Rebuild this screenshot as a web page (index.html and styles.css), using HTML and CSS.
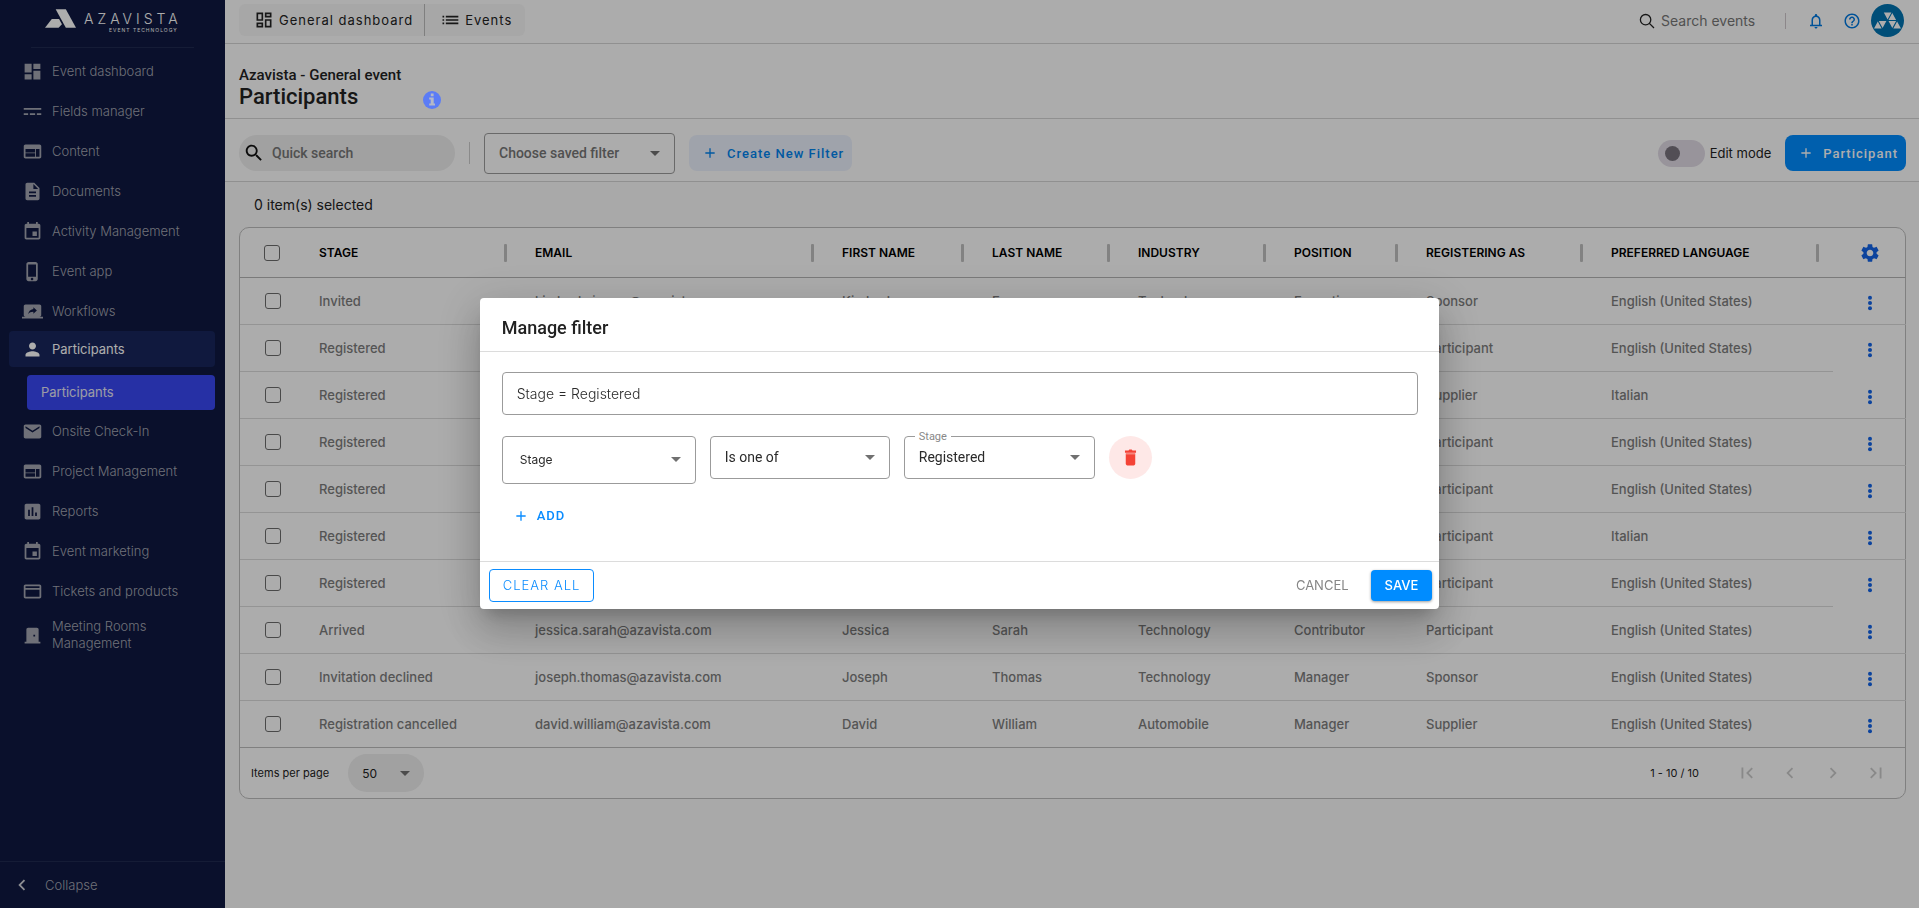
FILE: index.html
```html
<!DOCTYPE html>
<html lang="en">
<head>
<meta charset="utf-8">
<title>Participants</title>
<link rel="stylesheet" href="styles.css">
</head>
<body>
<svg class="sprite" aria-hidden="true">
  <symbol id="i-dashboard" viewBox="0 0 24 24"><path d="M3 13h8V3H3v10zm0 8h8v-6H3v6zm10 0h8V11h-8v10zm0-18v6h8V3h-8z"/></symbol>
  <symbol id="i-fields" viewBox="0 0 24 24"><path d="M2 8h20v2H2zM2 14h5v2H2zM9 14h6v2H9zM17 14h5v2h-5z"/></symbol>
  <symbol id="i-web" viewBox="0 0 24 24"><path d="M20 4H4c-1.1 0-1.99.9-1.99 2L2 18c0 1.1.9 2 2 2h16c1.1 0 2-.9 2-2V6c0-1.1-.9-2-2-2zm-5 14H4v-4h11v4zm0-5H4V9h11v4zm5 5h-4V9h4v9z"/></symbol>
  <symbol id="i-doc" viewBox="0 0 24 24"><path d="M14 2H6c-1.1 0-1.99.9-1.99 2L4 20c0 1.1.89 2 1.99 2H18c1.1 0 2-.9 2-2V8l-6-6zm2 16H8v-2h8v2zm0-4H8v-2h8v2zm-3-5V3.5L18.5 9H13z"/></symbol>
  <symbol id="i-event" viewBox="0 0 24 24"><path d="M17 12h-5v5h5v-5zM16 1v2H8V1H6v2H5c-1.11 0-1.99.9-1.99 2L3 19c0 1.1.89 2 2 2h14c1.1 0 2-.9 2-2V5c0-1.1-.9-2-2-2h-1V1h-2zm3 18H5V8h14v11z"/></symbol>
  <symbol id="i-phone" viewBox="0 0 24 24"><path d="M15.5 1h-8C6.12 1 5 2.12 5 3.5v17C5 21.88 6.12 23 7.5 23h8c1.38 0 2.5-1.12 2.5-2.5v-17C18 2.12 16.88 1 15.5 1zm-4 21c-.83 0-1.5-.67-1.5-1.5s.67-1.5 1.5-1.5 1.5.67 1.5 1.5-.67 1.5-1.5 1.5zm4.5-4H7V4h9v14z"/></symbol>
  <symbol id="i-share" viewBox="0 0 24 24"><path d="M20 18c1.1 0 1.99-.9 1.99-2L22 6c0-1.11-.9-2-2-2H4c-1.11 0-2 .89-2 2v10c0 1.1.89 2 2 2H0v2h24v-2h-4zm-7-3.53v-2.19c-2.78 0-4.61.85-6 2.72.56-2.67 2.11-5.33 6-5.87V7l4 3.73-4 3.74z"/></symbol>
  <symbol id="i-person" viewBox="0 0 24 24"><path d="M12 12c2.21 0 4-1.79 4-4s-1.79-4-4-4-4 1.79-4 4 1.79 4 4 4zm0 2c-2.67 0-8 1.34-8 4v2h16v-2c0-2.66-5.33-4-8-4z"/></symbol>
  <symbol id="i-mail" viewBox="0 0 24 24"><path d="M20 4H4c-1.1 0-1.99.9-1.99 2L2 18c0 1.1.9 2 2 2h16c1.1 0 2-.9 2-2V6c0-1.1-.9-2-2-2zm0 4l-8 5-8-5V6l8 5 8-5v2z"/></symbol>
  <symbol id="i-report" viewBox="0 0 24 24"><path d="M19 3H5c-1.1 0-2 .9-2 2v14c0 1.1.9 2 2 2h14c1.1 0 2-.9 2-2V5c0-1.1-.9-2-2-2zM9 17H7v-7h2v7zm4 0h-2V7h2v10zm4 0h-2v-4h2v4z"/></symbol>
  <symbol id="i-card" viewBox="0 0 24 24"><path d="M20 4H4c-1.11 0-1.99.89-1.99 2L2 18c0 1.11.89 2 2 2h16c1.11 0 2-.89 2-2V6c0-1.11-.89-2-2-2zm0 14H4v-8h16v8zm0-10H4V6h16v2z"/></symbol>
  <symbol id="i-door" viewBox="0 0 24 24"><path d="M19 19V5c0-1.1-.9-2-2-2H7c-1.1 0-2 .9-2 2v14H3v2h18v-2h-2zm-4-6h-2v-2h2v2z"/></symbol>
  <symbol id="i-dash-outline" viewBox="0 0 24 24"><path d="M19 5v2h-4V5h4M9 5v6H5V5h4m10 8v6h-4v-6h4M9 17v2H5v-2h4M21 3h-8v6h8V3zM11 3H3v10h8V3zm10 8h-8v10h8V11zm-10 4H3v6h8v-6z"/></symbol>
  <symbol id="i-list" viewBox="0 0 24 24"><path d="M3 13h2v-2H3v2zm0 4h2v-2H3v2zm0-8h2V7H3v2zm4 4h15v-2H7v2zm0 4h15v-2H7v2zM7 7v2h15V7H7z"/></symbol>
  <symbol id="i-bell" viewBox="0 0 24 24"><path d="M12 22c1.1 0 2-.9 2-2h-4c0 1.1.9 2 2 2zm8-5h-2v-6c0-3.07-1.63-5.64-4.5-6.32V4c0-.83-.67-1.5-1.5-1.5s-1.5.67-1.5 1.5v.68C7.64 5.36 6 7.92 6 11v6H4v2h16v-2zm-4 0H8v-6c0-2.48 1.51-4.5 4-4.5s4 2.02 4 4.5v6z"/></symbol>
  <symbol id="i-help" viewBox="0 0 24 24"><path d="M11 18h2v-2h-2v2zm1-16C6.48 2 2 6.48 2 12s4.48 10 10 10 10-4.48 10-10S17.52 2 12 2zm0 18c-4.41 0-8-3.59-8-8s3.59-8 8-8 8 3.59 8 8-3.59 8-8 8zm0-14c-2.21 0-4 1.79-4 4h2c0-1.1.9-2 2-2s2 .9 2 2c0 2-3 1.75-3 5h2c0-2.25 3-2.5 3-5 0-2.21-1.79-4-4-4z"/></symbol>
  <symbol id="i-search" viewBox="0 0 24 24"><path d="M15.5 14h-.79l-.28-.27C15.41 12.59 16 11.11 16 9.5 16 5.91 13.09 3 9.5 3S3 5.91 3 9.5 5.91 16 9.5 16c1.61 0 3.09-.59 4.23-1.57l.27.28v.79l5 4.99L20.49 19l-4.99-5zm-6 0C7.01 14 5 11.99 5 9.5S7.01 5 9.5 5 14 7.01 14 9.5 11.99 14 9.5 14z"/></symbol>
  <symbol id="i-search-thin" viewBox="0 0 16 16"><path d="M6.600 1.500a5.200 5.200 0 1 0 0 10.400a5.200 5.200 0 1 0 0-10.400M10.400 10.400L15 15" fill="none" stroke="currentColor" stroke-width="1.300"/></symbol>
  <symbol id="i-gear" viewBox="0 0 24 24"><path d="M19.140 12.940c.04-.3.06-.61.06-.94 0-.32-.02-.64-.07-.94l2.030-1.580c.18-.14.23-.41.12-.61l-1.920-3.320c-.12-.22-.37-.29-.59-.22l-2.390.96c-.5-.38-1.030-.7-1.620-.94l-.36-2.540c-.04-.24-.24-.41-.48-.41h-3.840c-.24 0-.43.17-.47.41l-.36 2.540c-.59.24-1.130.57-1.620.94l-2.390-.96c-.22-.08-.47 0-.59.22L2.740 8.870c-.12.21-.08.47.12.61l2.030 1.580c-.05.3-.09.63-.09.94s.02.64.07.94l-2.030 1.580c-.18.14-.23.41-.12.61l1.920 3.320c.12.22.37.29.59.22l2.390-.96c.5.38 1.030.7 1.620.94l.36 2.540c.05.24.24.41.48.41h3.840c.24 0 .44-.17.47-.41l.36-2.540c.59-.24 1.130-.56 1.620-.94l2.390.96c.22.08.47 0 .59-.22l1.920-3.320c.12-.22.07-.47-.12-.61l-2.010-1.580zM12 15.600c-1.980 0-3.600-1.620-3.600-3.600s1.620-3.600 3.600-3.600 3.600 1.620 3.600 3.600-1.620 3.600-3.600 3.600z"/></symbol>
  <symbol id="i-more" viewBox="0 0 24 24"><circle cx="12" cy="4" r="3"/><circle cx="12" cy="12" r="3"/><circle cx="12" cy="20" r="3"/></symbol>
  <symbol id="i-plus" viewBox="0 0 24 24"><path d="M19 13h-6v6h-2v-6H5v-2h6V5h2v6h6v2z"/></symbol>
  <symbol id="i-prev" viewBox="0 0 24 24"><path d="M15.410 7.410L14 6l-6 6 6 6 1.410-1.410L10.830 12z"/></symbol>
  <symbol id="i-next" viewBox="0 0 24 24"><path d="M10 6L8.590 7.410 13.170 12l-4.580 4.590L10 18l6-6z"/></symbol>
  <symbol id="i-first" viewBox="0 0 24 24"><path d="M18.410 16.590L13.820 12l4.590-4.590L17 6l-6 6 6 6zM6 6h2v12H6z"/></symbol>
  <symbol id="i-last" viewBox="0 0 24 24"><path d="M5.590 7.410L10.180 12l-4.590 4.590L7 18l6-6-6-6zM16 6h2v12h-2z"/></symbol>
  <symbol id="i-info" viewBox="0 0 18 18"><circle cx="9" cy="9" r="9"/><path fill="#b4b8c8" d="M7.800 2.400h2.800v2.800H7.800zM6.200 6.600h4.500v5.800h1.300v2H6.200v-2h1.500V8.600H6.200z"/></symbol>
  <symbol id="i-trash" viewBox="0 0 24 24"><path d="M6 8h12v12c0 1-.8 2-2 2H8c-1.200 0-2-1-2-2z"/><path opacity=".6" d="M6 6h12v2H6z"/><path d="M5 3h4.500l1-1h3l1 1H19v3H5z"/></symbol>
</svg>

<div class="app">
  <aside class="sidebar">
    <a class="brand" href="#" aria-label="Azavista Event Technology">
      <svg class="brand-mark" viewBox="0 0 32 20"><path d="M11 0h10.500L32 19H21.500z"/><path d="M7 10h7.500l3 5.500L14 19H0z"/></svg>
      <span class="brand-text"><span class="brand-name">AZAVISTA</span><span class="brand-sub">EVENT TECHNOLOGY</span></span>
    </a>
    <nav class="nav">
      <a href="#"><svg><use href="#i-dashboard"/></svg>Event dashboard</a>
      <a href="#"><svg><use href="#i-fields"/></svg>Fields manager</a>
      <a href="#"><svg><use href="#i-web"/></svg>Content</a>
      <a href="#"><svg><use href="#i-doc"/></svg>Documents</a>
      <a href="#"><svg><use href="#i-event"/></svg>Activity Management</a>
      <a href="#"><svg><use href="#i-phone"/></svg>Event app</a>
      <a href="#"><svg><use href="#i-share"/></svg>Workflows</a>
      <a href="#" class="open"><svg><use href="#i-person"/></svg>Participants</a>
      <a href="#" class="sub">Participants</a>
      <a href="#"><svg><use href="#i-mail"/></svg>Onsite Check-In</a>
      <a href="#"><svg><use href="#i-web"/></svg>Project Management</a>
      <a href="#"><svg><use href="#i-report"/></svg>Reports</a>
      <a href="#"><svg><use href="#i-event"/></svg>Event marketing</a>
      <a href="#"><svg><use href="#i-card"/></svg>Tickets and products</a>
      <a href="#" class="tall"><svg><use href="#i-door"/></svg>Meeting Rooms Management</a>
    </nav>
    <button class="collapse" type="button"><svg><use href="#i-prev"/></svg>Collapse</button>
  </aside>

  <main class="main">
    <header class="topbar">
      <div class="tabs">
        <a href="#"><svg><use href="#i-dash-outline"/></svg>General dashboard</a>
        <a href="#"><svg><use href="#i-list"/></svg>Events</a>
      </div>
      <label class="event-search"><svg><use href="#i-search-thin"/></svg><input type="text" placeholder="Search events" aria-label="Search events"></label>
      <span class="top-rule"></span>
      <button class="top-icon" type="button" aria-label="Notifications"><svg><use href="#i-bell"/></svg></button>
      <button class="top-icon" type="button" aria-label="Help"><svg><use href="#i-help"/></svg></button>
      <button class="avatar" type="button" aria-label="Account">
        <svg viewBox="0 0 33 33"><circle cx="16.500" cy="16.500" r="16.500" fill="#0073b1"/><path fill="#fff" d="M12.800 8.500h7.600l-3.800 7zM17.500 16l3.800-7 3.800 7zM3 24.500l3.800-7 3.800 7zM7.800 17h7.600l-3.800 7zM17.500 17h7.600l-3.800 7zM22.300 24.500l3.800-7 3.900 7z"/></svg>
      </button>
    </header>

    <section class="heading">
      <p class="event-name">Azavista - General event</p>
      <div class="title-row"><h1>Participants</h1><button class="info" type="button" aria-label="Information"><svg><use href="#i-info"/></svg></button></div>
    </section>

    <section class="toolbar">
      <label class="quick"><svg><use href="#i-search"/></svg><input type="text" placeholder="Quick search" aria-label="Quick search"></label>
      <span class="tool-rule"></span>
      <select class="select saved" aria-label="Saved filter"><option>Choose saved filter</option></select>
      <button class="create" type="button"><svg><use href="#i-plus"/></svg>Create New Filter</button>
      <label class="switch"><input type="checkbox"><span class="track"></span>Edit mode</label>
      <button class="add-participant" type="button"><svg><use href="#i-plus"/></svg>Participant</button>
    </section>

    <p class="selected">0 item(s) selected</p>

    <section class="card">
      <table class="grid">
        <colgroup><col class="c-check"><col class="c-stage"><col class="c-email"><col class="c-first"><col class="c-last"><col class="c-industry"><col class="c-position"><col class="c-reg"><col class="c-lang"><col class="c-menu"></colgroup>
        <thead><tr>
          <th class="pick"><input type="checkbox" aria-label="Select all"></th>
          <th><span>STAGE</span></th><th><span>EMAIL</span></th><th><span>FIRST NAME</span></th><th><span>LAST NAME</span></th><th><span>INDUSTRY</span></th><th><span>POSITION</span></th><th><span>REGISTERING AS</span></th><th><span>PREFERRED LANGUAGE</span></th>
          <th class="menu"><button type="button" aria-label="Table settings"><svg><use href="#i-gear"/></svg></button></th>
        </tr></thead>
        <tbody>
          <tr><td class="pick"><input type="checkbox" aria-label="Select row"></td><td>Invited</td><td>kimberly.james@azavista.com</td><td>Kimberly</td><td>Evans</td><td>Technology</td><td>Executive</td><td>Sponsor</td><td>English (United States)</td><td class="menu"><button type="button" aria-label="Row menu"><svg><use href="#i-more"/></svg></button></td></tr>
          <tr class="short"><td class="pick"><input type="checkbox" aria-label="Select row"></td><td>Registered</td><td></td><td></td><td></td><td></td><td></td><td>Participant</td><td>English (United States)</td><td class="menu"><button type="button" aria-label="Row menu"><svg><use href="#i-more"/></svg></button></td></tr>
          <tr><td class="pick"><input type="checkbox" aria-label="Select row"></td><td>Registered</td><td></td><td></td><td></td><td></td><td></td><td>Supplier</td><td>Italian</td><td class="menu"><button type="button" aria-label="Row menu"><svg><use href="#i-more"/></svg></button></td></tr>
          <tr><td class="pick"><input type="checkbox" aria-label="Select row"></td><td>Registered</td><td></td><td></td><td></td><td></td><td></td><td>Participant</td><td>English (United States)</td><td class="menu"><button type="button" aria-label="Row menu"><svg><use href="#i-more"/></svg></button></td></tr>
          <tr><td class="pick"><input type="checkbox" aria-label="Select row"></td><td>Registered</td><td></td><td></td><td></td><td></td><td></td><td>Participant</td><td>English (United States)</td><td class="menu"><button type="button" aria-label="Row menu"><svg><use href="#i-more"/></svg></button></td></tr>
          <tr><td class="pick"><input type="checkbox" aria-label="Select row"></td><td>Registered</td><td></td><td></td><td></td><td></td><td></td><td>Participant</td><td>Italian</td><td class="menu"><button type="button" aria-label="Row menu"><svg><use href="#i-more"/></svg></button></td></tr>
          <tr class="short"><td class="pick"><input type="checkbox" aria-label="Select row"></td><td>Registered</td><td></td><td></td><td></td><td></td><td></td><td>Participant</td><td>English (United States)</td><td class="menu"><button type="button" aria-label="Row menu"><svg><use href="#i-more"/></svg></button></td></tr>
          <tr><td class="pick"><input type="checkbox" aria-label="Select row"></td><td>Arrived</td><td>jessica.sarah@azavista.com</td><td>Jessica</td><td>Sarah</td><td>Technology</td><td>Contributor</td><td>Participant</td><td>English (United States)</td><td class="menu"><button type="button" aria-label="Row menu"><svg><use href="#i-more"/></svg></button></td></tr>
          <tr><td class="pick"><input type="checkbox" aria-label="Select row"></td><td>Invitation declined</td><td>joseph.thomas@azavista.com</td><td>Joseph</td><td>Thomas</td><td>Technology</td><td>Manager</td><td>Sponsor</td><td>English (United States)</td><td class="menu"><button type="button" aria-label="Row menu"><svg><use href="#i-more"/></svg></button></td></tr>
          <tr><td class="pick"><input type="checkbox" aria-label="Select row"></td><td>Registration cancelled</td><td>david.william@azavista.com</td><td>David</td><td>William</td><td>Automobile</td><td>Manager</td><td>Supplier</td><td>English (United States)</td><td class="menu"><button type="button" aria-label="Row menu"><svg><use href="#i-more"/></svg></button></td></tr>
        </tbody>
      </table>
      <footer class="pager">
        <label for="per-page">Items per page</label>
        <select class="select per-page" id="per-page"><option>50</option></select>
        <span class="range">1 - 10 / 10</span>
        <button type="button" disabled aria-label="First page"><svg><use href="#i-first"/></svg></button>
        <button type="button" disabled aria-label="Previous page"><svg><use href="#i-prev"/></svg></button>
        <button type="button" disabled aria-label="Next page"><svg><use href="#i-next"/></svg></button>
        <button type="button" disabled aria-label="Last page"><svg><use href="#i-last"/></svg></button>
      </footer>
    </section>
  </main>
</div>

<div class="backdrop">
  <form class="dialog" role="dialog" aria-labelledby="dialog-title">
    <h2 id="dialog-title">Manage filter</h2>
    <div class="dialog-body">
      <input class="expression" type="text" value="Stage = Registered" aria-label="Filter expression">
      <div class="condition">
        <select class="select field" aria-label="Field"><option>Stage</option></select>
        <select class="select operator" aria-label="Operator"><option>Is one of</option></select>
        <div class="outlined"><label for="stage-value">Stage</label><select class="select value" id="stage-value"><option>Registered</option></select></div>
        <button class="remove" type="button" aria-label="Delete condition"><svg><use href="#i-trash"/></svg></button>
      </div>
      <button class="add" type="button"><svg><use href="#i-plus"/></svg>ADD</button>
    </div>
    <footer class="dialog-actions">
      <button class="clear" type="button">CLEAR ALL</button>
      <button class="cancel" type="button">CANCEL</button>
      <button class="save" type="submit">SAVE</button>
    </footer>
  </form>
</div>
</body>
</html>
```
FILE: styles.css
```css
* { box-sizing: border-box; }
body { margin: 0; font-family: Inter, "Liberation Sans", sans-serif; font-size: 14px; color: #222; background: #f9f9f9; }
svg { display: block; flex: none; fill: currentColor; }
button, input, select { font: inherit; color: inherit; }
button { display: flex; align-items: center; justify-content: center; padding: 0; border: 0; background: none; white-space: nowrap; }
a { color: inherit; text-decoration: none; }
p, h1, h2 { margin: 0; }
.sprite { display: none; }

.app { display: flex; min-height: 100vh; }

.sidebar { display: flex; flex-direction: column; flex: none; width: 225px; background: #0f1941; color: #a4a6b2; }
.brand { display: flex; align-items: flex-start; gap: 8px; height: 48px; margin: 0 31px; padding: 9px 0 0 14px; border-bottom: 1px solid #1f2a50; color: #fff; }
.brand-mark { width: 31px; height: 20px; }
.brand-text { display: flex; flex-direction: column; align-items: flex-end; padding-top: 2px; }
.brand-name { font-size: 14px; line-height: 16px; letter-spacing: 4px; font-weight: 300; }
.brand-sub { padding-right: 4px; font-size: 5px; line-height: 6px; letter-spacing: 1px; }
.nav { display: flex; flex-direction: column; gap: 4px; padding: 5px 10px 0 9px; font-size: 13px; font-weight: 300; line-height: 17px; }
.nav a { display: flex; align-items: center; gap: 9px; min-height: 36px; padding-left: 13px; border-radius: 4px; }
.nav svg { width: 21px; height: 21px; }
.nav .open { margin-top: -2px; background: #18265c; color: #fff; font-weight: 400; }
.nav .sub { min-height: 35px; margin: 4px 0 -1px 18px; padding-left: 14px; background: #3948f4; color: #e6e6f4; font-weight: 400; }
.nav .tall { min-height: 44px; padding-right: 40px; }
.collapse { justify-content: flex-start; gap: 12px; margin-top: auto; height: 47px; padding-left: 11px; border-top: 1px solid #1f2a50; font-size: 13px; font-weight: 300; }
.collapse svg { width: 22px; height: 22px; color: #d0d0d8; }

.main { flex: 1; min-width: 0; }
.topbar { display: flex; align-items: center; height: 44px; padding: 0 15px 2px 14px; background: #fefefe; border-bottom: 1px solid #d4d4d4; }
.tabs { display: flex; height: 32px; margin: 0 auto 2px 0; border-radius: 6px; background: #f7f7f7; font-size: 13px; letter-spacing: 1px; }
.tabs a { display: flex; align-items: center; gap: 5px; padding: 0 13px 0 15px; }
.tabs a:first-child { padding-right: 11px; border-right: 1px solid #bbb; }
.tabs svg { width: 20px; height: 20px; }
.event-search { display: flex; align-items: center; gap: 6px; }
.event-search svg { width: 16px; height: 16px; }
.event-search input { width: 118px; border: 0; padding: 0; background: none; outline: 0; }
.event-search input::placeholder { color: #777; opacity: 1; }
.top-rule { width: 1px; height: 16px; margin: 0 18px 0 6px; background: #cfc8cc; }
.top-icon { width: 24px; margin-right: 12px; color: #0079e0; }
.top-icon svg { width: 18px; height: 18px; }
.top-icon + .avatar { margin-left: -5px; }
.avatar svg { width: 33px; height: 33px; }

.heading { height: 75px; padding: 21px 14px 0; background: #fefefe; border-bottom: 1px solid #d4d4d4; }
.event-name { font-family: Roboto, sans-serif; font-size: 15px; line-height: 20px; font-weight: 500; }
.title-row { display: flex; align-items: flex-end; gap: 65px; }
.title-row h1 { font-family: Roboto, sans-serif; font-size: 22px; line-height: 24px; font-weight: 500; }
.info { position: relative; z-index: 2; color: #5b7cf6; }
.info svg { width: 18px; height: 18px; }

.toolbar { display: flex; align-items: center; height: 63px; padding: 6px 13px 0 14px; background: #fefefe; border-bottom: 1px solid #d4d4d4; font-family: Roboto, sans-serif; }
.quick { display: flex; align-items: center; width: 216px; height: 36px; padding-left: 4px; gap: 7px; border-radius: 18px; background: #ededed; }
.quick svg { width: 22px; height: 22px; color: #111; }
.quick input { flex: 1; min-width: 0; border: 0; padding: 0; background: none; outline: 0; font-weight: 500; }
.quick input::placeholder { color: #777; opacity: 1; }
.tool-rule { width: 1px; height: 22px; margin: 0 14px; background: #ccc; }
.select { appearance: none; border: 1px solid #9b9b9b; border-radius: 4px; outline: 0; background: url("data:image/svg+xml,%3Csvg xmlns='http://www.w3.org/2000/svg' viewBox='0 0 10 5'%3E%3Cpath fill='%23707070' d='M0 0h10L5 5z'/%3E%3C/svg%3E") no-repeat right 14px center / 10px 5px; }
.saved { width: 191px; height: 41px; padding: 0 14px; color: #777; font-weight: 500; }
.create, .add-participant { height: 36px; margin-left: 14px; padding: 0 8px 0 13px; gap: 9px; border-radius: 8px; font-size: 13px; font-weight: 500; letter-spacing: 1px; }
.create { background: #ebf0fc; color: #0083ee; }
.add-participant { background: #008cff; color: #fff; }
.create svg, .add-participant svg, .add svg { width: 16px; height: 16px; }
.switch { display: flex; align-items: center; gap: 5px; margin-left: auto; font-family: Inter, sans-serif; font-size: 13px; }
.switch input { position: absolute; opacity: 0; }
.track { display: flex; align-items: center; width: 47px; height: 27px; padding-left: 7px; border-radius: 14px; background: #e1dbe5; }
.track::before { content: ""; width: 15px; height: 15px; border-radius: 50%; background: #79747e; }

.selected { padding: 13px 29px 0; line-height: 20px; height: 45px; }

.card { margin: 0 13px 0 14px; border: 1px solid #bdbdbd; border-radius: 10px; background: #fefefe; }
.grid { width: 100%; table-layout: fixed; border-collapse: separate; border-spacing: 0; font-size: 13px; font-weight: 500; color: #7d7d7d; }
.c-check { width: 65px; } .c-stage { width: 216px; } .c-email { width: 307px; } .c-first { width: 150px; } .c-last { width: 146px; }
.c-industry { width: 156px; } .c-position { width: 132px; } .c-reg { width: 185px; } .c-lang { width: 236px; } .c-menu { width: 73px; }
.grid th { height: 50px; padding: 0 14px; text-align: left; font-size: 12px; font-weight: 600; color: #000; border-bottom: 1px solid #b4b4b4; }
.grid th span { display: flex; align-items: center; justify-content: space-between; white-space: nowrap; }
.grid th span::after { content: ""; width: 3px; height: 18px; border-radius: 1px; background: #c0c0c0; }
.grid td { height: 47px; padding: 0 14px; white-space: nowrap; border-bottom: 1px solid #dadada; }
.grid .short .menu { border-bottom-color: transparent; }
.grid .pick { padding: 0 0 0 24px; }
.grid td.pick { padding-left: 25px; }
.grid .pick input { display: block; appearance: none; width: 16px; height: 16px; margin: 0; border: 1px solid #6c6c6c; border-radius: 3px; }
.grid .menu { padding: 0 24px; color: #1264e8; }
.grid .menu svg { width: 22px; height: 22px; }
.grid .menu button { margin: 0 auto; }
.grid td.menu { padding-top: 3px; }
.grid td.menu svg { width: 16px; height: 16px; }
.grid tbody tr:last-child td { border-bottom-color: #bdbdbd; }
.pager { display: flex; align-items: center; height: 50px; padding: 0 17px 0 11px; font-size: 11px; }
.per-page { width: 76px; height: 38px; margin-left: 19px; padding: 0 14px; border: 0; border-radius: 19px; background-color: #ededed; font-size: 12px; }
.range { margin: 0 28px 0 auto; }
.pager button { width: 24px; margin-left: 19px; color: #cacaca; }
.pager button svg { width: 22px; height: 22px; }
.range + button { margin-left: 8px; }

.backdrop { position: fixed; inset: 0; z-index: 1; display: flex; align-items: center; justify-content: center; padding-bottom: 2px; background: rgba(0, 0, 0, .32); }
.dialog { width: 50%; border-radius: 4px; background: #fff; box-shadow: 0 11px 15px -7px rgba(0, 0, 0, .2), 0 24px 38px 3px rgba(0, 0, 0, .14), 0 9px 46px 8px rgba(0, 0, 0, .12); font-family: Roboto, sans-serif; color: #2a2a2a; }
.dialog h2 { padding: 20px 22px 13px; font-size: 18px; line-height: 20px; font-weight: 500; color: #222; border-bottom: 1px solid #dcdcdc; }
.dialog-body { display: flex; flex-direction: column; align-items: flex-start; height: 209px; padding: 20px 21px 0 22px; }
.expression { width: 100%; height: 43px; padding: 0 14px; border: 1px solid #9b9b9b; border-radius: 4px; outline: 0; font-family: Inter, sans-serif; font-weight: 300; }
.condition { display: flex; align-items: flex-start; gap: 14px; margin-top: 21px; }
.field { width: 194px; height: 48px; padding: 0 17px; font-family: Inter, sans-serif; font-size: 12px; }
.operator { width: 180px; height: 43px; padding: 0 14px; }
.outlined { position: relative; }
.outlined label { position: absolute; top: -6px; left: 11px; padding: 0 4px; background: #fff; color: #888; font-size: 11px; line-height: 14px; }
.value { width: 191px; height: 43px; padding: 0 14px; }
.remove { width: 43px; height: 43px; border-radius: 50%; background: #fee8e7; color: #f44336; }
.remove svg { width: 19px; height: 19px; }
.add { gap: 8px; margin: 16px 0 0 11px; height: 32px; color: #0a8cff; font-size: 13px; font-weight: 500; letter-spacing: 1px; }
.dialog-actions { display: flex; align-items: center; height: 48px; padding: 0 7px 0 9px; border-top: 1px solid #dcdcdc; font-family: Inter, sans-serif; font-size: 13px; }
.clear { height: 33px; padding: 0 13px; border: 1px solid #0a8cff; border-radius: 4px; color: #0a8cff; letter-spacing: 1px; font-weight: 300; }
.cancel { margin: 0 22px 0 auto; color: #868686; }
.save { height: 31px; padding: 0 14px; border-radius: 4px; background: #008cff; color: #fff; font-weight: 500; box-shadow: 0 1px 3px rgba(0, 0, 0, .4); }
```
